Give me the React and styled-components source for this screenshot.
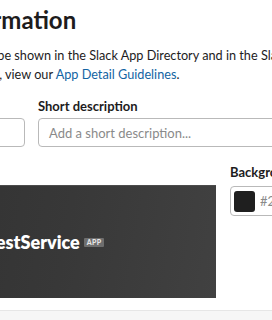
import React from 'react';
import styled, { createGlobalStyle } from 'styled-components';

const Global = createGlobalStyle`
  html, body { margin: 0; padding: 0; background: #fff; }
  body {
    width: 272px; height: 320px; overflow: hidden;
    font-family: Lato, "Noto Sans", sans-serif; color: #1d1c1d;
  }
`;

const Page = styled.div`
  width: 272px;
  height: 320px;
  overflow: hidden;
  display: flex;
  flex-direction: column;
  background: #fff;
`;

const Content = styled.div`
  margin-left: -122px;
  width: 620px;
  padding-top: 5px;
  flex: 1;
`;

const Title = styled.h2`
  margin: 0 0 0 -12px;
  font-size: 24px;
  font-weight: 700;
  line-height: 30px;
  color: #1d1c1d;
`;

const Para = styled.p`
  margin: 11px 0 0 3px;
  font-size: 12.7px;
  line-height: 19px;
  color: #1d1c1d;
  white-space: nowrap;
`;

const Link = styled.a`
  color: #1264a3;
  text-decoration: none;
`;

const FieldsRow = styled.div`
  display: flex;
  gap: 13px;
  margin-top: 13px;
`;

const Field = styled.div`
  display: flex;
  flex-direction: column;
  gap: 3px;
  width: ${p => p.$w}px;
`;

const Label = styled.label`
  font-size: 13px;
  font-weight: 700;
  line-height: 18px;
  color: #1d1c1d;
  white-space: nowrap;
`;

const Input = styled.div`
  height: 29px;
  box-sizing: border-box;
  border: 1px solid #b9b9b9;
  border-radius: 4px;
  padding: 0 10px;
  display: flex;
  align-items: center;
  font-size: 13px;
  color: #8a8a8a;
  white-space: nowrap;
`;

const PreviewRow = styled.div`
  display: flex;
  gap: 14px;
  margin-top: 16px;
`;

const PreviewCol = styled.div`
  display: flex;
  flex-direction: column;
  gap: 5px;
`;

const HiddenLabel = styled(Label)`
  visibility: hidden;
`;

const PreviewBox = styled.div`
  width: 338px;
  height: 113px;
  margin-top: -1px;
  box-sizing: border-box;
  border-top: 1px solid #4c4c4c;
  background: linear-gradient(100deg, #303030 0%, #383838 55%, #414141 100%);
  display: flex;
  align-items: center;
  padding-left: 66px;
  gap: 7px;
`;

const AppIcon = styled.div`
  width: 36px;
  height: 36px;
  border-radius: 6px;
  background: #5a5a5a;
  flex: none;
`;

const AppName = styled.span`
  font-size: 18px;
  font-weight: 800;
  color: #fff;
  white-space: nowrap;
`;

const Badge = styled.span`
  background: #6e6e6e;
  color: #e6e6e6;
  font-size: 7px;
  font-weight: 900;
  line-height: 9px;
  padding: 0 3px;
  border-radius: 1px;
  letter-spacing: 0.3px;
  margin-left: -3px;
`;

const ColorInput = styled.div`
  width: 180px;
  height: 30px;
  box-sizing: border-box;
  border: 1px solid #b9b9b9;
  border-radius: 4px;
  display: flex;
  align-items: center;
  padding-left: 3px;
  gap: 5px;
  font-size: 13px;
  color: #8a8a8a;
`;

const Swatch = styled.div`
  width: 21px;
  height: 21px;
  border-radius: 3px;
  background: #1f1f1f;
`;

const Footer = styled.div`
  height: 9px;
  flex: none;
  border-top: 1px solid #e6e6e6;
  background: #f6f6f6;
`;

export default function App() {
  return (
    <Page>
      <Global />
      <Content>
        <Title>Display Information</Title>
        <Para>
          This information will be shown in the Slack App Directory and in the Slack client.
          <br />
          For more information, view our <Link href="#">App Detail Guidelines</Link>.
        </Para>
        <FieldsRow>
          <Field $w={147}>
            <Label>App name</Label>
            <Input>TestService</Input>
          </Field>
          <Field $w={400}>
            <Label>Short description</Label>
            <Input>Add a short description...</Input>
          </Field>
        </FieldsRow>
        <PreviewRow>
          <PreviewCol>
            <HiddenLabel>Preview</HiddenLabel>
            <PreviewBox>
              <AppIcon />
              <AppName>TestService</AppName>
              <Badge>APP</Badge>
            </PreviewBox>
          </PreviewCol>
          <PreviewCol>
            <Label>Background color</Label>
            <ColorInput>
              <Swatch />
              #222222
            </ColorInput>
          </PreviewCol>
        </PreviewRow>
      </Content>
      <Footer />
    </Page>
  );
}
